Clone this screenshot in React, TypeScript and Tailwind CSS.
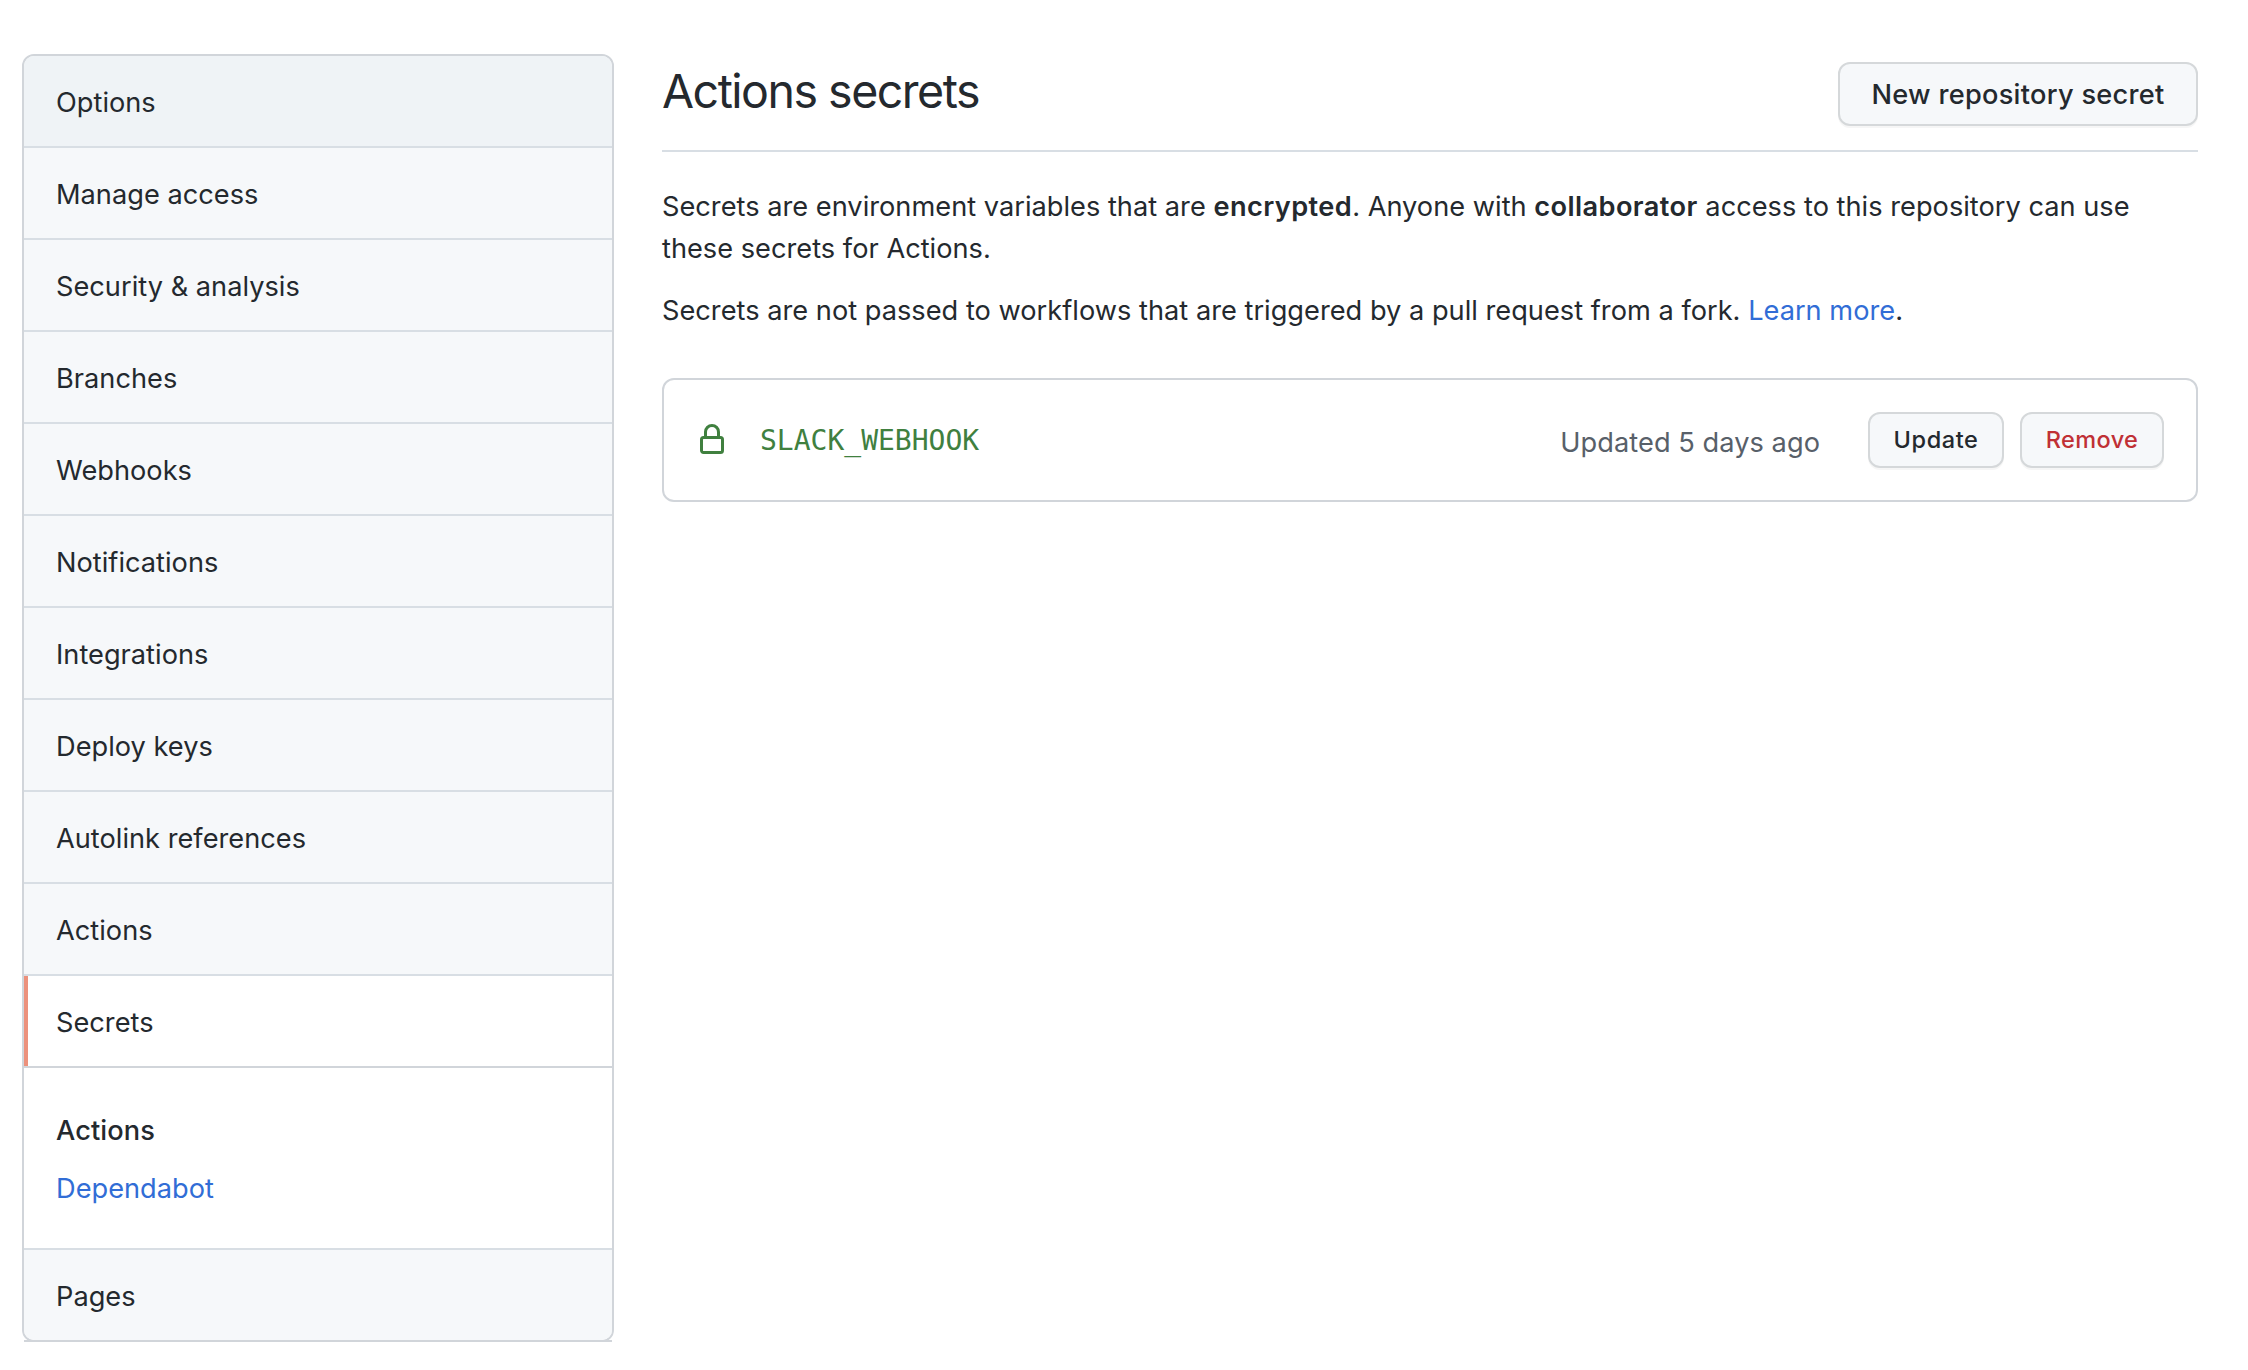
import React from "react";

const itemsBefore = [
  "Options",
  "Manage access",
  "Security & analysis",
  "Branches",
  "Webhooks",
  "Notifications",
  "Integrations",
  "Deploy keys",
  "Autolink references",
  "Actions",
];

function Sidebar() {
  return (
    <nav className="relative w-[592px] shrink-0 self-start rounded-[12px] border-2 border-[#d1d5da]">
      {itemsBefore.map((label, i) => (
        <a
          key={label}
          className={
            i === 0
              ? "flex h-[92px] items-center rounded-t-[10px] border-b-2 border-[#d8dee4] bg-[#eff3f6] px-8 pt-[3px]"
              : "flex h-[92px] items-center border-b-2 border-[#d8dee4] bg-[#f6f8fa] px-8 pt-[3px]"
          }
        >
          {label}
        </a>
      ))}
      <a className="relative flex h-[92px] items-center border-b-2 border-[#d1d5da] bg-white px-8 pt-[3px]">
        <span className="absolute inset-y-0 left-0 w-1 bg-[#ec917c]" />
        Secrets
      </a>
      <div className="flex h-[182px] flex-col border-b-2 border-[#d8dee4] px-8 pt-[41.5px]">
        <span className="h-[58px] leading-[42px] font-medium tracking-[0.1px]">Actions</span>
        <a className="leading-[42px] text-[#316dd6]">Dependabot</a>
      </div>
      <a className="flex h-[90px] items-center rounded-b-[10px] bg-[#f6f8fa] px-8 pt-[3px]">Pages</a>
      <span className="absolute inset-x-0 -bottom-[2px] h-[2px] bg-[#d1d5da]" />
    </nav>
  );
}

function LockIcon() {
  return (
    <svg width="32" height="32" viewBox="0 0 16 16" fill="#40803f" className="shrink-0">
      <path
        fillRule="evenodd"
        d="M4 4v2h-.25A1.75 1.75 0 002 7.75v5.5c0 .966.784 1.75 1.75 1.75h8.5A1.75 1.75 0 0014 13.25v-5.5A1.75 1.75 0 0012.25 6H12V4a4 4 0 10-8 0zm6.5 2V4a2.5 2.5 0 10-5 0v2h5zM12 7.5h.25a.25.25 0 01.25.25v5.5a.25.25 0 01-.25.25h-8.5a.25.25 0 01-.25-.25v-5.5a.25.25 0 01.25-.25H12z"
      />
    </svg>
  );
}

export default function App() {
  return (
    <div className="flex h-[1370px] w-[2248px] gap-12 overflow-hidden bg-white pt-[54px] pl-[22px] font-['Inter',sans-serif] text-[27.2px] leading-[42px] tracking-[0.015px] text-[#24292e]">
      <Sidebar />
      <main className="w-[1536px]">
        <header className="flex h-[98px] items-start justify-between border-b-2 border-[#d8dee4]">
          <h1 className="pt-px text-[46.5px] leading-[72px] font-normal tracking-[-1.5px]">Actions secrets</h1>
          <button className="mt-2 h-16 w-[360px] rounded-[12px] border-2 border-[#d5d8da] bg-[#f6f8fa] pt-px text-[27.2px] font-medium tracking-[0.28px] shadow-[0_2px_0_rgba(27,31,35,0.04)]">
            New repository secret
          </button>
        </header>
        <p className="mt-[33.5px] whitespace-nowrap">
          Secrets are environment variables that are{" "}
          <strong className="font-semibold tracking-[0.4px]">encrypted</strong>. Anyone with{" "}
          <strong className="font-semibold tracking-[0.4px]">collaborator</strong> access to this repository can use
          <br />
          these secrets for Actions.
        </p>
        <p className="mt-5 whitespace-nowrap">
          Secrets are not passed to workflows that are triggered by a pull request from a fork.{" "}
          <a className="text-[#316dd6]">Learn more</a>.
        </p>
        <section className="mt-[46.5px] flex h-[124px] items-center rounded-[12px] border-2 border-[#d1d5da] px-8">
          <LockIcon />
          <code className="ml-8 pt-px font-['DejaVu_Sans_Mono',monospace] text-[28px] tracking-normal text-[#40803f]">
            SLACK_WEBHOOK
          </code>
          <span className="mr-12 ml-auto pt-[5px] tracking-[0.05px] text-[#586069]">Updated 5 days ago</span>
          <button className="h-14 w-[136px] rounded-[12px] border-2 border-[#d5d8da] bg-[#f6f8fa] pb-px text-[23.5px] font-medium tracking-[0.6px] shadow-[0_2px_0_rgba(27,31,35,0.04)]">
            Update
          </button>
          <button className="ml-4 h-14 w-[144px] rounded-[12px] border-2 border-[#d5d8da] bg-[#f6f8fa] pb-px text-[23.5px] font-medium tracking-[0.4px] text-[#c03035] shadow-[0_2px_0_rgba(27,31,35,0.04)]">
            Remove
          </button>
        </section>
      </main>
    </div>
  );
}
